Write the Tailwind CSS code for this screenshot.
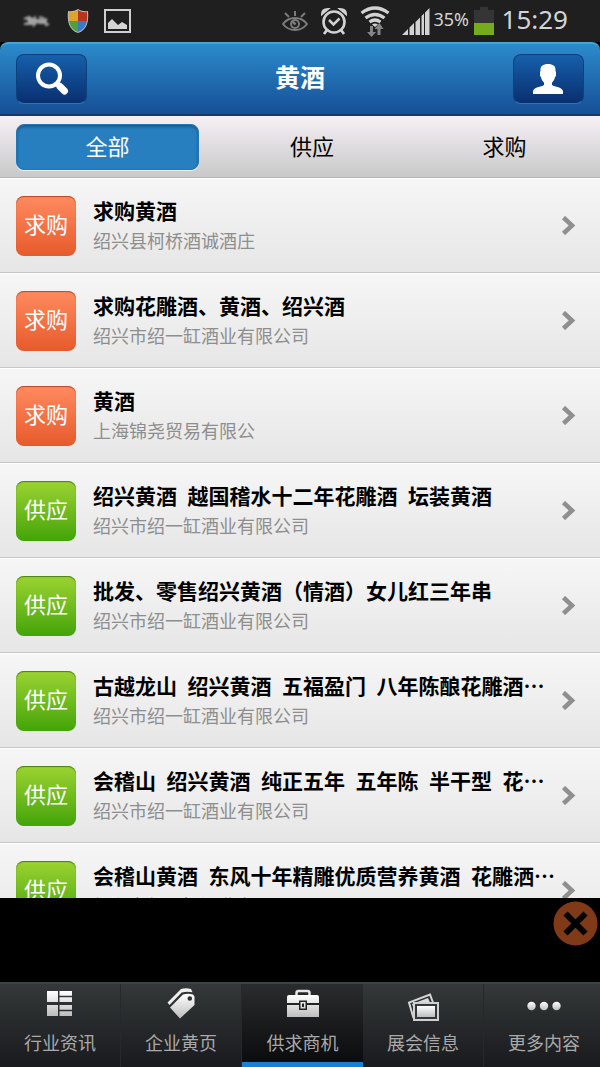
<!DOCTYPE html>
<html lang="zh-CN">
<head>
<meta charset="utf-8">
<meta name="viewport" content="width=device-width, initial-scale=1">
<title>黄酒</title>
<script src="https://cdn.jsdelivr.net/npm/@tailwindcss/browser@4"></script>
</head>
<body class="flex h-screen flex-col overflow-hidden bg-black font-['Noto_Sans_CJK_SC',sans-serif]">

<!-- status bar -->
<div class="flex h-[42px] shrink-0 items-center justify-between bg-[#1f1f1f] pr-8 pl-[22px] text-[#d4d4d4]">
  <div class="flex items-center gap-4">
    <svg class="h-4 w-7 blur-[1px]" viewBox="0 0 28 16" fill="none" stroke="#a3a3a3" stroke-width="2"><path d="M2 6l5-2v6l-4 1M9 4v7M8 6h6M13 3l-1 9 4-4M17 4l4 1-3 5h5M24 5v7l3-1M2 11h9M5 7h20M6 9h18"/></svg>
    <svg class="h-[26px] w-6" viewBox="0 0 24 26"><clipPath id="sh"><path d="M12 2c3 2 6 2.500 9 2 1 10-1 17-9 20C4 21 2 14 3 4c3 .5 6 0 9-2z"/></clipPath><path d="M12 1c3 2 7 2.500 10 2 1 11-1 19-10 22C3 22 1 14 2 3c3 .5 7 0 10-2z" fill="#b9bdb9"/><g clip-path="url(#sh)"><path d="M2 0h10v13H2z" fill="#dda32a"/><path d="M12 0h11v13H12z" fill="#b5351f"/><path d="M2 13h10v13H2z" fill="#4fa03c"/><path d="M12 13h11v13H12z" fill="#3a78cc"/></g></svg>
    <svg class="-ml-0.5 h-6 w-[27px]" viewBox="0 0 27 24"><rect x="1" y="1" width="25" height="22" fill="none" stroke="#cfcfcf" stroke-width="2"/><path d="M4 20v-6l4-4 6 6 4-3 5 3v4z" fill="#d4d4d4"/></svg>
  </div>
  <div class="flex items-center">
    <svg class="mr-3 h-[22px] w-[26px]" viewBox="0 0 26 22" fill="none" stroke="#7b7b7b"><path d="M1 14c6-8 18-8 24 0-6 8-18 8-24 0z" stroke-width="2"/><circle cx="13" cy="14" r="5" fill="#7b7b7b" stroke="none"/><circle cx="13" cy="14" r="3" fill="#1f1f1f" stroke="none"/><path d="M13.500 14.500L10 11" stroke-width="2.500"/><path d="M13 1v5M3 3l4 4M23 3l-4 4" stroke-width="2"/></svg>
    <svg class="mr-3 h-7 w-7" viewBox="0 0 28 28" fill="none" stroke="#d2d2d2"><circle cx="14" cy="15" r="10.500" stroke-width="2.600"/><path d="M9 13l4.500 4.500 6-6" stroke-width="2.500"/><path d="M2 7c0-4 3-5 6-5zM26 7c0-4-3-5-6-5z" fill="#d2d2d2" stroke-width="2"/><path d="M7 23l-3 4M21 23l3 4" stroke-width="2.800"/></svg>
    <svg class="mr-3 h-[31px] w-[30px]" viewBox="0 0 30 31"><g fill="none" stroke="#d2d2d2" stroke-width="3.200"><path d="M1.500 7q13.500-10 27 0"/><path d="M5.500 12q9.500-7 19 0"/><path d="M9.500 16q5.500-4 11 0"/></g><path d="M12 18.500q3-2 6 0l-3 2.500z" fill="#d2d2d2"/><path d="M10 20h3v6h3l-4.500 5L7 26h3zM17.500 29v-6h-3l5-6 4 6h-3v6z" fill="#858585"/></svg>
    <svg class="mr-1 h-[27px] w-[28px]" viewBox="0 0 28 27" fill="#d2d2d2"><path d="M0 27l6-6v6zM7.500 27v-7.500l4.500-4.500v12zM13.500 27V14l4.500-4.500V27zM19.500 27V8L22 5.500V27zM23 27V4.500L27.500 0v27z"/></svg>
    <span class="mr-1 w-9 pb-1 font-['Noto_Sans'] text-[18px] leading-9">35%</span>
    <svg class="mr-2 h-[30px] w-5" viewBox="0 0 20 30"><path d="M6 1h8v3h6v14H0V4h6z" fill="#353535"/><path d="M0 17h20v12H0z" fill="#76ab1b"/></svg>
    <span class="pb-1 font-['Noto_Sans'] text-[26px] leading-9">15:29</span>
  </div>
</div>

<!-- title bar -->
<header class="flex h-[74px] shrink-0 items-center justify-between rounded-t-[8px] border-t-2 border-b-2 border-t-[#45a4d3] border-b-[#183966] bg-linear-to-b from-[#2c8bcb] to-[#174f96] px-4">
  <button aria-label="搜索" class="flex h-[50px] w-[71px] items-center justify-center rounded-[8px] border border-[#10407f] border-b-[#2a77b8] bg-linear-to-b from-[#1660ab] to-[#0a2f70]">
    <svg class="h-9 w-9" viewBox="0 0 36 36" fill="none" stroke="#fff"><circle cx="15" cy="14.500" r="11" stroke-width="4"/><path d="M23 22.500l2 2" stroke-width="5"/><path d="M26 25.500l4.500 4.500" stroke-width="7" stroke-linecap="round"/></svg>
  </button>
  <h1 class="pb-1.5 text-[25px] leading-9 font-bold text-white">黄酒</h1>
  <button aria-label="个人中心" class="flex h-[50px] w-[71px] items-center justify-center rounded-[8px] border border-[#10407f] border-b-[#2a77b8] bg-linear-to-b from-[#1660ab] to-[#0a2f70]">
    <svg class="h-8 w-8" viewBox="0 0 32 32" fill="#fff"><path d="M16 1c5 0 8 2 7.500 7l.5 1v4l-1 1c-.6 3-1.500 4-3 5.500V22c3 2 10 2 11 6v3H1v-3c1-4 8-4 11-6v-2.500C10.500 18 9.600 17 9 14l-1-1V9l.5-1C8 3 11 1 16 1z"/></svg>
  </button>
</header>

<!-- category tabs -->
<div role="tablist" class="grid h-[62px] shrink-0 grid-cols-[183fr_226fr_159fr] items-center border-b border-[#b4b4b4] bg-linear-to-b from-[#f6f0f5] to-[#c9c9c9] px-4 text-[22px] leading-8 text-black">
  <button role="tab" aria-selected="true" class="h-[46px] rounded-[8px] border border-[#2475b3] bg-[#277fc0] pb-1 text-white shadow-[inset_0_2px_3px_#1b5a8c,0_1px_0_#e8f0f5]">全部</button>
  <button role="tab" aria-selected="false" class="h-[46px] pb-1">供应</button>
  <button role="tab" aria-selected="false" class="h-[46px] pb-1">求购</button>
</div>

<!-- listings -->
<main class="min-h-0 flex-1 overflow-hidden bg-[#f5f5f5]">
  <ul id="list"></ul>
</main>

<template id="row">
  <li>
    <a href="#" class="flex h-[95px] items-center border-t border-b border-t-white border-b-[#c6c6c6] bg-linear-to-b from-[#f6f6f6] to-[#e6e6e6] pr-6 pl-4">
      <span data-badge class="flex h-[60px] w-[60px] shrink-0 items-center justify-center rounded-[8px] pb-1.5 text-[22px] leading-8 text-white"></span>
      <span class="ml-[17px] min-w-0 flex-1 pb-0.5 whitespace-nowrap">
        <span data-title class="block text-[21px] leading-[30px] font-bold text-black"></span>
        <span data-company class="block text-[18px] leading-[30px] text-[#8e8e8e]"></span>
      </span>
      <svg class="h-[19px] w-[15px] shrink-0" viewBox="0 0 15 19" fill="none" stroke="#8f8f8f" stroke-width="4.500"><path d="M2.500 1.500l8.500 8-8.500 8"/></svg>
    </a>
  </li>
</template>

<!-- ad strip -->
<div class="flex h-[84px] shrink-0 items-start justify-end bg-black pt-[3px] pr-[2px]">
  <button aria-label="关闭广告">
    <svg class="h-[45px] w-[45px]" viewBox="0 0 45 45"><circle cx="22.500" cy="22.500" r="22" fill="#813a17"/><path d="M12.500 12.500l20 20M32.500 12.500l-20 20" stroke="#000" stroke-width="6"/></svg>
  </button>
</div>

<!-- bottom navigation -->
<svg class="absolute h-0 w-0" aria-hidden="true"><defs><linearGradient id="g" x1="0" y1="0" x2="0" y2="1"><stop offset="0" stop-color="#fff"/><stop offset="1" stop-color="#bdbdbd"/></linearGradient></defs></svg>
<nav class="grid h-[85px] shrink-0 grid-cols-[121fr_121fr_121fr_121fr_116fr] border-t-2 border-[#3d4446] text-[18px] leading-7 text-[#a9a9a9]">
  <a href="#" class="flex flex-col items-center border-r border-[#25292b] bg-linear-to-b from-[#343838] to-[#191a1e] pt-1">
    <svg class="h-10 w-10" viewBox="0 0 40 40" fill="url(#g)"><path d="M7 3h11v11H7zM19.500 3H32v4.800H19.500zM19.500 9.200H32V14H19.500zM7 17h11v11H7zM19.500 17H32v4.800H19.500zM19.500 23.200H32V28H19.500z"/></svg>
    <span>行业资讯</span>
  </a>
  <a href="#" class="flex flex-col items-center border-r border-[#25292b] bg-linear-to-b from-[#343838] to-[#191a1e] pt-1">
    <svg class="h-10 w-10 overflow-visible" viewBox="0 0 40 40"><path fill="url(#g)" fill-rule="evenodd" d="M9 19.500L22 6.500q5-1.500 10 0l1.500 2v8.500L19 30.500zM26.500 10.500a2.300 2.300 0 1 0 4.600 0 2.300 2.300 0 0 0-4.600 0z"/><path d="M6.500 14.500L20 1q5-1.500 10 0l1.500 3.200q-6-1.200-10.800.3L8.500 17z" fill="#efefef"/></svg>
    <span>企业黄页</span>
  </a>
  <a href="#" aria-current="page" class="flex flex-col items-center border-b-[5px] border-[#1a80d4] bg-linear-to-b from-[#2b2c2d] to-[#0b0c0e] pt-1">
    <svg class="h-10 w-10" viewBox="0 0 40 40"><path fill="none" stroke="#e6e6e6" stroke-width="2.500" d="M13.500 7V5q0-2 2-2h9q2 0 2 2v2"/><path fill="url(#g)" fill-rule="evenodd" d="M6 7h28q2 0 2 2v6H24v-2.500h-8V15H4V9q0-2 2-2zM4 17h12v5h8v-5h12v12H4zM17.500 14h5v6.500h-5zM19 15.500v3.500h2v-3.500z"/></svg>
    <span>供求商机</span>
  </a>
  <a href="#" class="flex flex-col items-center border-r border-[#25292b] bg-linear-to-b from-[#343838] to-[#191a1e] pt-1">
    <svg class="h-10 w-10" viewBox="0 0 40 40"><path d="M10.500 30L6 14.500 27 6.500l3 8" fill="none" stroke="#d6d6d6" stroke-width="2"/><path d="M12 24l-3-8L25 10l2 4.500H12z" fill="#ddd"/><rect x="11" y="15" width="24" height="17" fill="#33373a" stroke="#d0d0d0" stroke-width="2"/><rect x="14" y="18" width="18" height="11" fill="url(#g)"/></svg>
    <span>展会信息</span>
  </a>
  <a href="#" class="flex flex-col items-center bg-linear-to-b from-[#343838] to-[#191a1e] pt-1 pl-1">
    <svg class="h-10 w-10" viewBox="0 0 40 40" fill="url(#g)"><circle cx="7.500" cy="18" r="4.200"/><circle cx="20" cy="18" r="4.200"/><circle cx="32.500" cy="18" r="4.200"/></svg>
    <span>更多内容</span>
  </a>
</nav>

<script>
const buy = 'bg-linear-to-b from-[#ff8a5f] to-[#e65a2a] shadow-[inset_0_1px_1px_#b9472a]';
const sell = 'bg-linear-to-b from-[#9bd331] to-[#41a406] shadow-[inset_0_1px_1px_#487f17]';
const co = '绍兴市绍一缸酒业有限公司';
const rows = [
  ['求购', '求购黄酒', '绍兴县柯桥酒诚酒庄'],
  ['求购', '求购花雕酒、黄酒、绍兴酒', co],
  ['求购', '黄酒', '上海锦尧贸易有限公'],
  ['供应', '绍兴黄酒\u2002越国稽水十二年花雕酒\u2002坛装黄酒', co],
  ['供应', '批发、零售绍兴黄酒（情酒）女儿红三年串', co],
  ['供应', '古越龙山\u2002绍兴黄酒\u2002五福盈门\u2002八年陈酿花雕酒…', co],
  ['供应', '会稽山\u2002绍兴黄酒\u2002纯正五年\u2002五年陈\u2002半干型\u2002花…', co],
  ['供应', '会稽山黄酒\u2002东风十年精雕优质营养黄酒\u2002花雕洒…', co],
];
const tpl = document.getElementById('row');
for (const [kind, title, company] of rows) {
  const n = tpl.content.cloneNode(true);
  const b = n.querySelector('[data-badge]');
  b.textContent = kind;
  b.className += ' ' + (kind === '求购' ? buy : sell);
  n.querySelector('[data-title]').textContent = title;
  n.querySelector('[data-company]').textContent = company;
  document.getElementById('list').append(n);
}
</script>
</body>
</html>
